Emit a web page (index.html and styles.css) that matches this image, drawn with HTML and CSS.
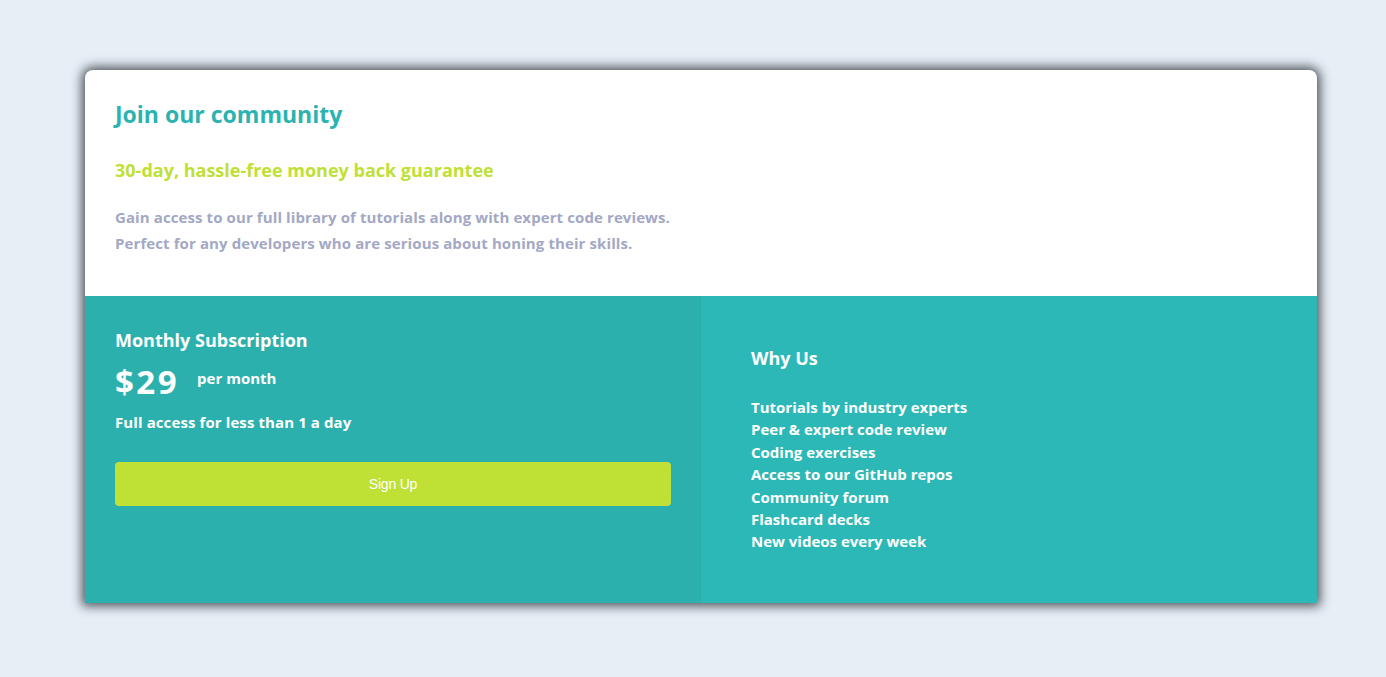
FILE: index.html
```html
<!DOCTYPE html>
<html lang="en">
<head>
<meta charset="utf-8">
<title>Single price grid</title>
<link rel="stylesheet" href="styles.css">
</head>
<body>
<main class="card">
  <section class="top">
    <h1 class="title">Join our community</h1>
    <h2 class="guarantee">30-day, hassle-free money back guarantee</h2>
    <p class="desc">Gain access to our full library of tutorials along with expert code reviews.<br>Perfect for any developers who are serious about honing their skills.</p>
  </section>
  <div class="bottom">
    <section class="sub">
      <h3 class="sub-title">Monthly Subscription</h3>
      <div class="price-row"><span class="price">$29</span><span class="per">per month</span></div>
      <p class="access">Full access for less than 1 a day</p>
      <button class="btn">Sign Up</button>
    </section>
    <section class="why">
      <h3 class="why-title">Why Us</h3>
      <ul class="why-list">
        <li>Tutorials by industry experts</li>
        <li>Peer &amp; expert code review</li>
        <li>Coding exercises</li>
        <li>Access to our GitHub repos</li>
        <li>Community forum</li>
        <li>Flashcard decks</li>
        <li>New videos every week</li>
      </ul>
    </section>
  </div>
</main>
</body>
</html>
```

FILE: styles.css
```css
* { box-sizing: border-box; }
html, body { margin: 0; padding: 0; }
body {
  background: #e6eef6;
  font-family: "Open Sans", "Noto Sans", sans-serif;
  font-weight: 700;
  padding: 70px 69px 0 85px;
  height: 677px;
}
.card {
  width: 1232px;
  border-radius: 8px 8px 0 0;
  box-shadow: 0 0 11px 3px rgba(35, 40, 45, 0.8);
  overflow: hidden;
  background: #fff;
}
.top {
  height: 226px;
  padding: 29px 30px 0;
}
.title {
  margin: 0;
  font-size: 23px;
  line-height: 30px;
  color: #2bb3b1;
  font-weight: 700;
}
.guarantee {
  margin: 29px 0 0;
  font-size: 18px;
  line-height: 24px;
  color: #bfe035;
  font-weight: 700;
}
.desc {
  margin: 22px 0 0;
  font-size: 15px;
  letter-spacing: 0.1px;
  line-height: 26px;
  color: #a3a8c4;
}
.bottom {
  display: flex;
  height: 307px;
}
.sub {
  width: 616px;
  background: #2bb0ae;
  padding: 32px 30px 0;
  color: #fff;
}
.sub-title {
  margin: 0;
  font-size: 18px;
  line-height: 25px;
}
.price-row {
  display: flex;
  align-items: center;
  margin-top: 9px;
  height: 40px;
}
.price {
  font-size: 33px;
  letter-spacing: 2.5px;
  line-height: 40px;
}
.per {
  font-size: 15px;
  margin-left: 18px;
  margin-top: -9px;
}
.access {
  margin: 9px 0 0;
  font-size: 15px;
  letter-spacing: 0.1px;
  line-height: 22px;
}
.btn {
  display: block;
  width: 556px;
  height: 44px;
  margin-top: 29px;
  border: 0;
  border-radius: 4px;
  background: #bfe035;
  color: #fff;
  font-family: "Liberation Sans Narrow", "Liberation Sans", sans-serif;
  font-size: 14px;
  letter-spacing: -0.2px;
  font-weight: 400;
}
.why {
  flex: 1;
  background: #2bb8b6;
  padding: 50px 50px 0;
  color: #fff;
}
.why-title {
  margin: 0;
  font-size: 18px;
  line-height: 25px;
}
.why-list {
  list-style: none;
  margin: 25px 0 0;
  padding: 0;
  font-size: 15px;
  line-height: 22.4px;
}
```
